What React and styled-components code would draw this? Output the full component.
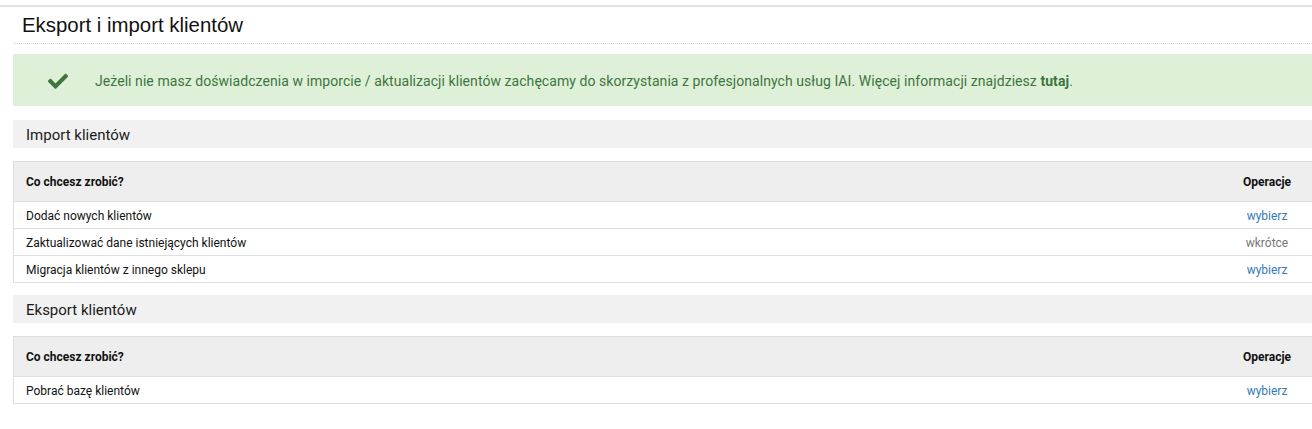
import React from 'react';
import styled, { createGlobalStyle } from 'styled-components';

const GlobalStyle = createGlobalStyle`
	html, body {
		margin: 0;
		padding: 0;
		background: #fff;
		font-family: Roboto, "Liberation Sans", Arial, sans-serif;
		color: #222;
	}
`;

const Page = styled.div`
	border-top: 2px solid #e1e1e1;
	margin-top: 5px;
	padding-left: 13px;
`;

const TitleBar = styled.div`
	border-bottom: 1px dotted #d6d6d6;
	padding: 7px 9px 7px;
	height: 22px;
`;

const Title = styled.h1`
	margin: 0;
	font-family: "Liberation Sans", Arial, sans-serif;
	font-weight: 400;
	font-size: 20.4px;
	line-height: 22px;
	color: #111;
`;

const Alert = styled.div`
	display: flex;
	align-items: center;
	margin-top: 10px;
	height: 52px;
	background-color: #dff0d8;
	color: #3c763d;
	font-size: 14px;
`;

const AlertIcon = styled.svg`
	width: 20px;
	height: 16px;
	margin: 2px 27px 0 35px;
	fill: #3c763d;
	flex-shrink: 0;
`;

const AlertText = styled.p`
	margin: 2px 0 0;
	letter-spacing: 0.06px;

	& strong {
		font-weight: 700;
	}
`;

const SectionHeader = styled.h2`
	margin: ${(p) => p.top}px 0 0;
	height: 28px;
	line-height: 28px;
	padding: 1px 0 0 13px;
	box-sizing: border-box;
	background-color: #f1f1f1;
	font-size: 15px;
	font-weight: 400;
	color: #1a1a1a;
`;

const Table = styled.table`
	width: 100%;
	margin-top: 13px;
	border-collapse: collapse;
	border: 1px solid #dedede;
	border-right: none;
	font-size: 12px;
`;

const HeadCell = styled.th`
	height: 39px;
	background-color: #eee;
	padding: 0 0 0 12px;
	text-align: ${(p) => (p.center ? 'center' : 'left')};
	font-weight: 700;
	color: #111;
	width: ${(p) => (p.center ? '70px' : 'auto')};
	padding-right: ${(p) => (p.center ? '10px' : '0')};
`;

const Row = styled.tr`
	border-top: 1px solid #dedede;
`;

const Cell = styled.td`
	height: 25px;
	padding: 1px 0 0 12px;
	color: #111;
	text-align: ${(p) => (p.center ? 'center' : 'left')};
	padding-right: ${(p) => (p.center ? '10px' : '0')};
`;

const Action = styled.a`
	color: ${(p) => (p.muted ? '#777' : '#337ab7')};
	text-decoration: none;
	cursor: ${(p) => (p.muted ? 'default' : 'pointer')};
`;

const CheckIcon = () => (
	<AlertIcon viewBox="0 0 512 400">
		<path d="M173.9 389.5L7.5 223.1c-10-10-10-26.2 0-36.2l36.2-36.2c10-10 26.2-10 36.2 0L192 262.8 432.1 22.7c10-10 26.2-10 36.2 0l36.2 36.2c10 10 10 26.2 0 36.2L210.1 389.5c-10 10-26.2 10-36.2 0z" />
	</AlertIcon>
);

const OpsTable = ({ rows }) => (
	<Table>
		<thead>
			<tr>
				<HeadCell>Co chcesz zrobić?</HeadCell>
				<HeadCell center>Operacje</HeadCell>
			</tr>
		</thead>
		<tbody>
			{rows.map((row) => (
				<Row key={row.label}>
					<Cell>{row.label}</Cell>
					<Cell center>
						<Action muted={row.soon}>{row.soon ? 'wkrótce' : 'wybierz'}</Action>
					</Cell>
				</Row>
			))}
		</tbody>
	</Table>
);

const importRows = [
	{ label: 'Dodać nowych klientów' },
	{ label: 'Zaktualizować dane istniejących klientów', soon: true },
	{ label: 'Migracja klientów z innego sklepu' },
];

const exportRows = [{ label: 'Pobrać bazę klientów' }];

export default function App() {
	return (
		<>
			<GlobalStyle />
			<Page>
				<TitleBar>
					<Title>Eksport i import klientów</Title>
				</TitleBar>
				<Alert>
					<CheckIcon />
					<AlertText>
						Jeżeli nie masz doświadczenia w imporcie / aktualizacji klientów zachęcamy do skorzystania z
						profesjonalnych usług IAI. Więcej informacji znajdziesz <strong>tutaj</strong>.
					</AlertText>
				</Alert>
				<SectionHeader top={14}>Import klientów</SectionHeader>
				<OpsTable rows={importRows} />
				<SectionHeader top={12}>Eksport klientów</SectionHeader>
				<OpsTable rows={exportRows} />
			</Page>
		</>
	);
}
